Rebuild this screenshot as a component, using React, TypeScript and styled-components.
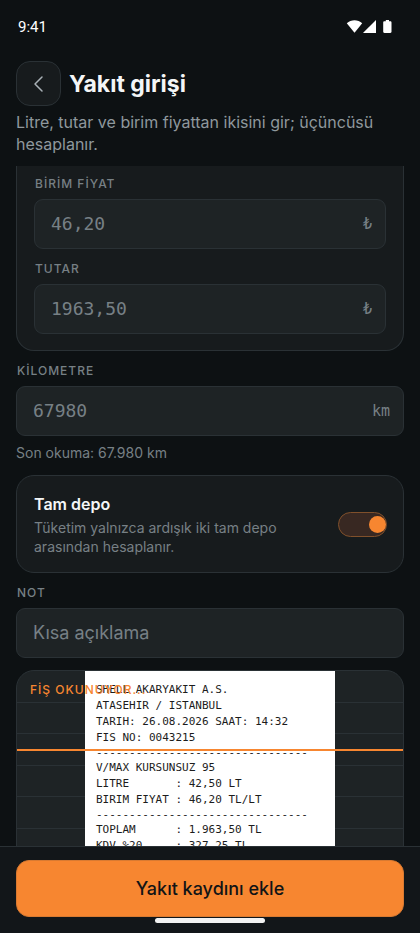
import React from "react";
import styled, { createGlobalStyle } from "styled-components";

const c = {
  page: "#0d1113",
  card: "#171b1d",
  field: "#1e2325",
  line: "#2a3135",
  text: "#f4f6f7",
  soft: "#8f989d",
  muted: "#778085",
  accent: "#f78630",
};

const sans = `Inter, "Noto Sans", sans-serif`;
const mono = `"DejaVu Sans Mono", "Liberation Mono", monospace`;

const GlobalStyle = createGlobalStyle`
  *, *::before, *::after { box-sizing: border-box; }
  body { margin: 0; background: ${c.page}; color: ${c.text}; font-family: ${sans}; }
  h1, h2, p { margin: 0; }
  input, button { font-family: inherit; }
`;

const Screen = styled.div`
  display: flex;
  flex-direction: column;
  height: 100vh;
  overflow: hidden;
`;

const StatusBar = styled.div`
  display: flex;
  align-items: center;
  justify-content: space-between;
  flex: none;
  height: 54px;
  padding: 0 28px 0 18px;
  font: 400 15px/20px Roboto, sans-serif;
  color: #fff;
`;

const StatusIcons = styled.svg`
  display: block;
  width: 46px;
  height: 16px;
`;

const Header = styled.header`
  flex: none;
  padding: 7px 16px 11px;
`;

const TitleRow = styled.div`
  display: flex;
  align-items: center;
  gap: 8px;
`;

const BackButton = styled.button`
  display: grid;
  place-items: center;
  width: 45px;
  height: 45px;
  padding: 0;
  border: 1px solid ${c.line};
  border-radius: 14px;
  background: ${c.card};
  color: #a9b1b6;
`;

const Title = styled.h1`
  font-size: 23px;
  line-height: 32px;
  font-weight: 700;
`;

const Subtitle = styled.p`
  margin-top: 5px;
  font-size: 16px;
  line-height: 22px;
  color: ${c.soft};
`;

const Content = styled.main`
  display: flex;
  flex-direction: column;
  gap: 12px;
  flex: 1;
  min-height: 0;
  padding: 0 16px;
  overflow: hidden;
  & > * { flex: none; }
`;

const PriceCard = styled.section`
  display: flex;
  flex-direction: column;
  gap: 12px;
  padding: 10px 17px 16px;
  border: 1px solid ${c.line};
  border-top: 0;
  border-radius: 0 0 18px 18px;
  background: ${c.card};
`;

const FieldBox = styled.div`
  display: flex;
  flex-direction: column;
  gap: 7px;
`;

const FieldLabel = styled.label`
  padding-left: 1px;
  font-size: 12px;
  line-height: 16px;
  font-weight: 500;
  letter-spacing: 1px;
  color: ${c.muted};
`;

const InputShell = styled.div`
  display: flex;
  align-items: center;
  height: 50px;
  padding: 0 13px 0 16px;
  border: 1px solid ${c.line};
  border-radius: 9px;
  background: ${c.field};
`;

const TextInput = styled.input<{ $mono?: boolean }>`
  flex: 1;
  min-width: 0;
  padding: 0;
  border: 0;
  outline: 0;
  background: transparent;
  color: ${c.text};
  font-family: ${(p) => (p.$mono ? mono : sans)};
  font-size: 18px;
  line-height: 24px;
  &::placeholder { color: ${c.muted}; opacity: 1; }
`;

const Unit = styled.span`
  font-family: ${mono};
  font-size: 15px;
  line-height: 20px;
  color: ${c.muted};
`;

const Hint = styled.p`
  font-size: 14px;
  line-height: 20px;
  color: ${c.muted};
`;

const ToggleCard = styled.section`
  display: flex;
  align-items: center;
  justify-content: space-between;
  gap: 16px;
  padding: 16px 16px 16px 17px;
  border: 1px solid ${c.line};
  border-radius: 18px;
  background: ${c.card};
`;

const ToggleText = styled.label`
  display: flex;
  flex-direction: column;
  gap: 2px;
  max-width: 260px;
`;

const ToggleTitle = styled.span`
  font-size: 16px;
  line-height: 24px;
  font-weight: 600;
`;

const ToggleNote = styled.span`
  font-size: 14px;
  line-height: 19px;
  color: ${c.muted};
`;

const Switch = styled.input`
  appearance: none;
  display: flex;
  align-items: center;
  flex: none;
  width: 49px;
  height: 25px;
  margin: 0;
  border: 1px solid #80502b;
  border-radius: 13px;
  background: #382822;
  &::before {
    content: "";
    width: 17px;
    height: 17px;
    border-radius: 50%;
    background: ${c.accent};
  }
  &:checked { justify-content: flex-end; }
`;

const Scanner = styled.section`
  position: relative;
  display: grid;
  grid-template-rows: 252px;
  border: 1px solid ${c.line};
  border-radius: 18px;
  background: ${c.field};
  overflow: hidden;
`;

const Rules = styled.div`
  grid-area: 1 / 1;
  display: flex;
  flex-direction: column;
`;

const Rule = styled.div`
  flex: 1;
  border-bottom: 1px solid ${c.line};
`;

const Paper = styled.div`
  grid-area: 1 / 1;
  justify-self: center;
  width: 250px;
  padding: 11px;
  background: #fff;
  color: #1c1c1c;
  font-family: ${mono};
  font-size: 11px;
  white-space: pre;
`;

const PaperLine = styled.div<{ $divider?: boolean }>`
  line-height: ${(p) => (p.$divider ? 14 : 16)}px;
`;

const ScanLine = styled.div`
  position: absolute;
  top: 78px;
  left: 0;
  right: 0;
  height: 2px;
  background: ${c.accent};
`;

const ScanLabel = styled.span`
  position: absolute;
  top: 11px;
  left: 13px;
  font-size: 12px;
  line-height: 16px;
  font-weight: 500;
  letter-spacing: 1px;
  color: ${c.accent};
`;

const Footer = styled.footer`
  position: relative;
  flex: none;
  padding: 13px 16px 16px;
  border-top: 1px solid ${c.line};
  background: #121619;
`;

const SubmitButton = styled.button`
  display: block;
  width: 100%;
  height: 57px;
  border: 1px solid #d97a31;
  border-radius: 13px;
  background: ${c.accent};
  color: #111416;
  font-size: 18px;
  font-weight: 500;
`;

const HomeIndicator = styled.div`
  position: absolute;
  bottom: 10px;
  left: 50%;
  width: 110px;
  height: 5px;
  margin-left: -55px;
  border-radius: 3px;
  background: #f2f2f2;
`;

const divider = "-".repeat(32);
const receipt = [
  "SHELL AKARYAKIT A.S.",
  "ATASEHIR / ISTANBUL",
  "TARIH: 26.08.2026 SAAT: 14:32",
  "FIS NO: 0043215",
  divider,
  "V/MAX KURSUNSUZ 95",
  "LITRE       : 42,50 LT",
  "BIRIM FIYAT : 46,20 TL/LT",
  divider,
  "TOPLAM      : 1.963,50 TL",
  "KDV %20     : 327,25 TL",
];

type FieldProps = { id: string; label: string; placeholder: string; unit?: string };

function Field({ id, label, placeholder, unit }: FieldProps) {
  return (
    <FieldBox>
      <FieldLabel htmlFor={id}>{label}</FieldLabel>
      <InputShell>
        <TextInput
          id={id}
          $mono={Boolean(unit)}
          inputMode={unit ? "decimal" : "text"}
          placeholder={placeholder}
        />
        {unit && <Unit>{unit}</Unit>}
      </InputShell>
    </FieldBox>
  );
}

export default function App() {
  return (
    <Screen>
      <GlobalStyle />
      <StatusBar>
        <span>9:41</span>
        <StatusIcons viewBox="0 0 46 16" fill="#fff" aria-hidden="true">
          <path d="M0.8 4.300C5 0.300 12 0.300 16.200 4.300L8.500 13.700Z" />
          <path d="M17.200 14V13.700L30 1V14Z" />
          <path d="M39.800 1h3.200v1.200h1.300c.7 0 1.200.5 1.200 1.200v9.400c0 .7-.5 1.200-1.200 1.200h-5.900c-.7 0-1.200-.5-1.200-1.200V3.400c0-.7.5-1.200 1.200-1.200h1.400z" />
        </StatusIcons>
      </StatusBar>
      <Header>
        <TitleRow>
          <BackButton type="button" aria-label="Geri">
            <svg width="20" height="20" viewBox="0 0 20 20" fill="none" stroke="currentColor" strokeWidth="1.5" strokeLinecap="round" strokeLinejoin="round">
              <path d="M13 3L6 10L13 17" />
            </svg>
          </BackButton>
          <Title>Yakıt girişi</Title>
        </TitleRow>
        <Subtitle>Litre, tutar ve birim fiyattan ikisini gir; üçüncüsü hesaplanır.</Subtitle>
      </Header>
      <Content>
        <PriceCard>
          <Field id="unit-price" label="BİRİM FİYAT" placeholder="46,20" unit="₺" />
          <Field id="total" label="TUTAR" placeholder="1963,50" unit="₺" />
        </PriceCard>
        <FieldBox>
          <Field id="odometer" label="KİLOMETRE" placeholder="67980" unit="km" />
          <Hint>Son okuma: 67.980 km</Hint>
        </FieldBox>
        <ToggleCard>
          <ToggleText htmlFor="full-tank">
            <ToggleTitle>Tam depo</ToggleTitle>
            <ToggleNote>Tüketim yalnızca ardışık iki tam depo arasından hesaplanır.</ToggleNote>
          </ToggleText>
          <Switch id="full-tank" type="checkbox" role="switch" defaultChecked />
        </ToggleCard>
        <Field id="note" label="NOT" placeholder="Kısa açıklama" />
        <Scanner>
          <Rules>
            {Array.from({ length: 8 }, (_, i) => (
              <Rule key={i} />
            ))}
          </Rules>
          <Paper>
            {receipt.map((line, i) => (
              <PaperLine key={i} $divider={line === divider}>{line}</PaperLine>
            ))}
          </Paper>
          <ScanLabel>FİŞ OKUNUYOR...</ScanLabel>
          <ScanLine />
        </Scanner>
      </Content>
      <Footer>
        <SubmitButton type="submit">Yakıt kaydını ekle</SubmitButton>
        <HomeIndicator />
      </Footer>
    </Screen>
  );
}
